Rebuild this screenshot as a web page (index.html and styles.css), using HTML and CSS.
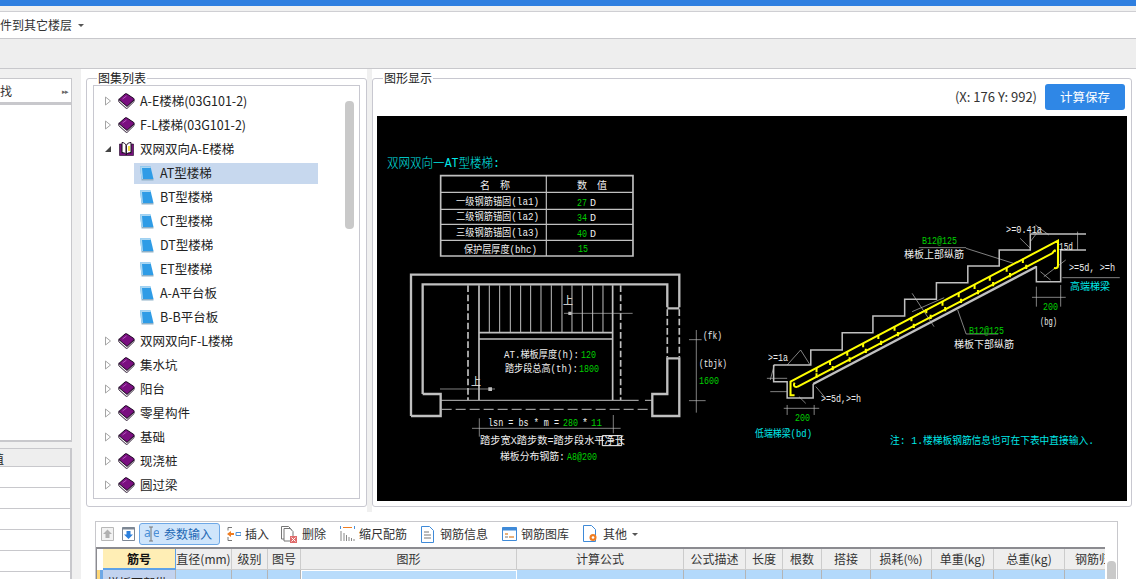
FILE: index.html
```html
<!DOCTYPE html>
<html lang="zh">
<head>
<meta charset="utf-8">
<title>图集列表</title>
<link rel="stylesheet" href="styles.css">
</head>
<body>
<svg class="defs" width="0" height="0" aria-hidden="true">
  <symbol id="book" viewBox="0 0 17 16">
    <path d="M.8 6.500 7 1c.6-.5 1.200-.5 2 0l6.800 4.500c.5.500.5 1 0 1.500L9 13.500z" fill="#7a0f80" stroke="#1a0520"/>
    <path d="M.8 6.500v2.200L8 15.200c.5.300 1 .3 1.300 0l6.800-6.700V7L9 13.500z" fill="#f4f4f4" stroke="#1a0520" stroke-width=".9"/>
    <path d="M4.500 6 8.500 3" stroke="#b555bd" stroke-width="1"/>
  </symbol>
  <symbol id="openbook" viewBox="0 0 17 16">
    <path d="M1.500 3v11.500h14V3h-2v9H3.500V3z" fill="#7a0f80" stroke="#1a0520" stroke-width=".6"/>
    <path d="M4 1.500c2 0 3.200 1 4.200 3v9c-1-1.300-2.200-2-4.200-2zM8.200 4.500c1-2 2.800-3 4.800-3v10c-2 0-3.800.7-4.800 2z" fill="#fff" stroke="#1a0520"/>
    <path d="M10 5h2v5h-2z" fill="#f4e04a"/>
  </symbol>
  <symbol id="leaf" viewBox="0 0 14 15">
    <path d="M0 .500h10.500l3 12.500H1.500z" fill="#2f9ce6"/>
    <path d="M0 .500h10.500l.4 1.500H2l1 11H1.500z" fill="#a9d6f2"/>
    <path d="M1.500 13h12v1.500h-12z" fill="#8fb0c6"/>
  </symbol>
  <symbol id="tri-open" viewBox="0 0 8 10"><path d="M1.500 1 6.500 5l-5 4z" fill="#fff" stroke="#a5a5a5"/></symbol>
  <symbol id="tri-down" viewBox="0 0 8 10"><path d="M7 2v6H1z" fill="#444"/></symbol>
</svg>

<div class="titlebar"></div>
<div class="strip"></div>
<div class="ribbon">
  <div class="ribbon-item"><span>件到其它楼层</span><i class="caret"></i></div>
</div>
<div class="band"></div>

<div class="main">
  <aside class="side">
    <div class="side-top">
      <div class="side-tab"><span>找</span><b class="more">▸▸</b></div>
    </div>
    <div class="side-bottom">
      <div class="side-head"><span>值</span></div>
      <div class="side-row"></div>
      <div class="side-row"></div>
      <div class="side-row"></div>
      <div class="side-row"></div>
      <div class="side-row"></div>
    </div>
  </aside>

  <div class="work">
    <div class="upper">
      <fieldset class="group tree-group">
        <legend>图集列表</legend>
        <div class="tree">
          <div class="scroll-thumb"></div>
          <div class="node"><svg class="tri"><use href="#tri-open"/></svg><svg class="ico"><use href="#book"/></svg><span>A-E楼梯(03G101-2)</span></div>
          <div class="node"><svg class="tri"><use href="#tri-open"/></svg><svg class="ico"><use href="#book"/></svg><span>F-L楼梯(03G101-2)</span></div>
          <div class="node"><svg class="tri"><use href="#tri-down"/></svg><svg class="ico"><use href="#openbook"/></svg><span>双网双向A-E楼梯</span></div>
          <div class="node leaf selected"><svg class="ico-leaf"><use href="#leaf"/></svg><span>AT型楼梯</span></div>
          <div class="node leaf"><svg class="ico-leaf"><use href="#leaf"/></svg><span>BT型楼梯</span></div>
          <div class="node leaf"><svg class="ico-leaf"><use href="#leaf"/></svg><span>CT型楼梯</span></div>
          <div class="node leaf"><svg class="ico-leaf"><use href="#leaf"/></svg><span>DT型楼梯</span></div>
          <div class="node leaf"><svg class="ico-leaf"><use href="#leaf"/></svg><span>ET型楼梯</span></div>
          <div class="node leaf"><svg class="ico-leaf"><use href="#leaf"/></svg><span>A-A平台板</span></div>
          <div class="node leaf"><svg class="ico-leaf"><use href="#leaf"/></svg><span>B-B平台板</span></div>
          <div class="node"><svg class="tri"><use href="#tri-open"/></svg><svg class="ico"><use href="#book"/></svg><span>双网双向F-L楼梯</span></div>
          <div class="node"><svg class="tri"><use href="#tri-open"/></svg><svg class="ico"><use href="#book"/></svg><span>集水坑</span></div>
          <div class="node"><svg class="tri"><use href="#tri-open"/></svg><svg class="ico"><use href="#book"/></svg><span>阳台</span></div>
          <div class="node"><svg class="tri"><use href="#tri-open"/></svg><svg class="ico"><use href="#book"/></svg><span>零星构件</span></div>
          <div class="node"><svg class="tri"><use href="#tri-open"/></svg><svg class="ico"><use href="#book"/></svg><span>基础</span></div>
          <div class="node"><svg class="tri"><use href="#tri-open"/></svg><svg class="ico"><use href="#book"/></svg><span>现浇桩</span></div>
          <div class="node"><svg class="tri"><use href="#tri-open"/></svg><svg class="ico"><use href="#book"/></svg><span>圆过梁</span></div>
        </div>
      </fieldset>

      <fieldset class="group draw-group">
        <legend>图形显示</legend>
        <div class="draw-head">
          <span class="coords">(X: 176 Y: 992)</span>
          <button class="save" type="button">计算保存</button>
        </div>
        <svg class="cad" width="750" height="385" viewBox="377 116 750 385">
          <!-- title + table -->
          <text class="t cy" x="387" y="167" textLength="113" lengthAdjust="spacingAndGlyphs">双网双向一AT型楼梯:</text>
          <g class="ln" transform="translate(377 140) scale(.3333)">
            <path stroke-width="5" d="M191 107H768V348H191z"/>
            <path stroke-width="3.500" d="M191 157H768M191 208H768M191 253H768M191 301H768M508 107V348"/>
          </g>
          <text class="s wh wide" x="480" y="189">名 称</text>
          <text class="s wh wide" x="577" y="189">数 值</text>
          <text class="s wh" x="456" y="205" textLength="83" lengthAdjust="spacingAndGlyphs">一级钢筋锚固(la1)</text>
          <text class="s wh" x="456" y="220" textLength="83" lengthAdjust="spacingAndGlyphs">二级钢筋锚固(la2)</text>
          <text class="s wh" x="456" y="236" textLength="83" lengthAdjust="spacingAndGlyphs">三级钢筋锚固(la3)</text>
          <text class="s wh" x="464" y="253" textLength="73" lengthAdjust="spacingAndGlyphs">保护层厚度(bhc)</text>
          <text class="s gr" x="577" y="206" textLength="10" lengthAdjust="spacingAndGlyphs">27</text><text class="s wh" x="590" y="206">D</text>
          <text class="s gr" x="577" y="221" textLength="10" lengthAdjust="spacingAndGlyphs">34</text><text class="s wh" x="590" y="221">D</text>
          <text class="s gr" x="577" y="237" textLength="10" lengthAdjust="spacingAndGlyphs">40</text><text class="s wh" x="590" y="237">D</text>
          <text class="s gr" x="578" y="252" textLength="10" lengthAdjust="spacingAndGlyphs">15</text>

          <!-- plan -->
          <g class="ln" transform="translate(400 270) scale(.3333)">
            <path stroke-width="7" d="M33 438V14H838V112M68 372V43H802V112M68 372H122V438H33M802 262V372H757V438H838V265H802M802 115H838"/>
            <path stroke-width="5" stroke-dasharray="20 8" d="M802 118V262M838 118V262M204 46V390M662 46V390"/>
            <path stroke-width="5" d="M237 46V390M638 46V390M237 188H638M237 207H638"/>
            <path stroke-width="3" d="M268 46V186M299 46V186M331 46V186M362 46V186M392 46V186M423 46V186M454 46V186M486 46V186M516 46V186M547 46V186M578 46V186M609 46V186M122 391H716M735 391H757"/>
            <path stroke-width="3" stroke-dasharray="30 12" d="M125 418H750"/>
            <path stroke-width="2" d="M492 130H698M120 357H285M889 180V428M867 209H905M867 392H917M216 475H662M238 445V500M640 435V490"/>
            <path class="fillg" stroke="none" d="M505 125h10v10h-10zM265 352h11v11h-11z"/>
            <path stroke="#fff" stroke-width="3" d="M607 497H665V527H607z"/>
          </g>
          <text class="s wh" x="563" y="304">上</text>
          <text class="s wh" x="471" y="385">上</text>
          <text class="s wh" x="703" y="339" textLength="19" lengthAdjust="spacingAndGlyphs">(fk)</text>
          <text class="s wh" x="699" y="367" textLength="28" lengthAdjust="spacingAndGlyphs">(tbjk)</text>
          <text class="s gr" x="699" y="384" textLength="20" lengthAdjust="spacingAndGlyphs">1600</text>
          <text class="s wh" x="504" y="358" textLength="75" lengthAdjust="spacingAndGlyphs">AT.梯板厚度(h):</text>
          <text class="s gr" x="581" y="358" textLength="15" lengthAdjust="spacingAndGlyphs">120</text>
          <text class="s wh" x="505" y="372" textLength="73" lengthAdjust="spacingAndGlyphs">踏步段总高(th):</text>
          <text class="s gr" x="579" y="372" textLength="20" lengthAdjust="spacingAndGlyphs">1800</text>
          <text class="s wh" x="488" y="426" textLength="71" lengthAdjust="spacingAndGlyphs">lsn = bs * m =</text>
          <text class="s gr" x="563" y="426" textLength="15" lengthAdjust="spacingAndGlyphs">280</text><text class="s wh" x="582" y="426">*</text><text class="s gr" x="591" y="426" textLength="11" lengthAdjust="spacingAndGlyphs">11</text>
          <text class="s wh" x="480" y="444" textLength="145" lengthAdjust="spacingAndGlyphs">踏步宽X踏步数=踏步段水平净长</text>
          <text class="s wh" x="500" y="460" textLength="65" lengthAdjust="spacingAndGlyphs">梯板分布钢筋:</text>
          <text class="s gr" x="567" y="460" textLength="30" lengthAdjust="spacingAndGlyphs">A8@200</text>

          <!-- section -->
          <g class="ln" transform="translate(750 210) scale(.3377 .3333)">
            <path stroke-width="4.500" d="M70 465H180V420H273V368H364V318H458V268H552V218H645V168H738V120H830V72H995M918 120H995M70 465V515H110V564H187V522M848 168V215H920V120"/>
            <path stroke-width="7" d="M187 522 848 170"/>
            <path stroke-width="2" d="M640 115 780 160M500 113H640M615 300 640 372H735M480 305 575 263M490 315 560 280M480 250 545 350M925 203H1095M848 230V290M920 225V290M835 262H935M100 595H205M110 585V615M190 585V615M72 465 60 510M110 465 150 420 178 465M50 505H110M60 545H110M845 45 885 75M800 85 830 115M830 95 860 55M970 65V120M935 150 870 200M860 185 890 210M195 530 220 560M145 560 165 580"/>
            <g class="rebar">
              <path stroke-width="6" d="M132 556H120V515L912 92V168Q912 176 900 174M140 531Q126 531 132 518M140 531 895 130Q906 114 902 126"/>
              <path stroke-width="6" d="M197 474v13M237 452v13M288 424v13M335 399v13M380 374v13M428 349v13M478 321v13M522 297v13M570 274v13M618 249v13M665 224v13M710 199v13M760 172v13M808 146v13M197 490v13M245 468v13M295 442v13M343 416v13M388 392v13M438 366v13M485 341v13M535 314v13M578 291v13M625 266v13M675 240v13M720 216v13M770 189v13M818 164v13"/>
            </g>
          </g>
          <text class="s gr" x="922" y="244" textLength="35" lengthAdjust="spacingAndGlyphs">B12@125</text>
          <text class="s wh" x="904" y="258" textLength="60" lengthAdjust="spacingAndGlyphs">梯板上部纵筋</text>
          <text class="s gr" x="969" y="334" textLength="35" lengthAdjust="spacingAndGlyphs">B12@125</text>
          <text class="s wh" x="954" y="348" textLength="60" lengthAdjust="spacingAndGlyphs">梯板下部纵筋</text>
          <text class="s wh" x="1006" y="233" textLength="36" lengthAdjust="spacingAndGlyphs">&gt;=0.41a</text>
          <text class="s wh" x="1059" y="250" textLength="14" lengthAdjust="spacingAndGlyphs">15d</text>
          <text class="s wh" x="1069" y="271" textLength="46" lengthAdjust="spacingAndGlyphs">&gt;=5d, &gt;=h</text>
          <text class="s cy" x="1070" y="290" textLength="40" lengthAdjust="spacingAndGlyphs">高端梯梁</text>
          <text class="s gr" x="1043" y="310" textLength="15" lengthAdjust="spacingAndGlyphs">200</text>
          <text class="s wh" x="1040" y="325" textLength="17" lengthAdjust="spacingAndGlyphs">(bg)</text>
          <text class="s wh" x="768" y="361" textLength="20" lengthAdjust="spacingAndGlyphs">&gt;=1a</text>
          <text class="s wh" x="821" y="402" textLength="40" lengthAdjust="spacingAndGlyphs">&gt;=5d,&gt;=h</text>
          <text class="s gr" x="795" y="421" textLength="15" lengthAdjust="spacingAndGlyphs">200</text>
          <text class="s cy" x="755" y="437" textLength="57" lengthAdjust="spacingAndGlyphs">低端梯梁(bd)</text>
          <text class="s cy" x="890" y="444" textLength="204" lengthAdjust="spacingAndGlyphs">注: 1.楼梯板钢筋信息也可在下表中直接输入.</text>
        </svg>
      </fieldset>
    </div>

    <div class="lower">
      <div class="grid-box">
        <div class="tools">
          <svg class="tool-ico arrow" width="13" height="14" viewBox="0 0 13 14"><path d="M.5.500h12v13H.5z" fill="#f2f2f2" stroke="#b8b8b8"/><path d="M6.500 2.500 11 7H8.500v4h-4V7H2z" fill="#b0b0b0"/></svg>
          <svg class="tool-ico arrow gap-s" width="13" height="14" viewBox="0 0 13 14"><path d="M.5.500h12v13H.5z" fill="#fff" stroke="#7d8794"/><path d="M.5.500h12v2H.5z" fill="#7d8794"/><path d="M6.500 12 2 7.500h2.500V4h4v3.500H11z" fill="#2b7fdc"/></svg>
          <div class="tool active">
            <svg width="15" height="16" viewBox="0 0 15 16"><text class="ae" x="0" y="11">a</text><text class="ae" x="9" y="11">e</text><path d="M5 1h4M5 15h4M7 1v14" stroke="#777" fill="none"/></svg>
            <span>参数输入</span>
          </div>
          <div class="tool">
            <svg width="14" height="16" viewBox="0 0 14 16"><path d="M5 1.500H1v3M1 11v3.500h4" stroke="#777" fill="none"/><path d="M0 8l4-3v2h3v2H4v2z" fill="#ef7d22"/><path d="M9 6.500h5v3H9z" fill="none" stroke="#4a90d9"/></svg>
            <span>插入</span>
          </div>
          <div class="tool">
            <svg width="17" height="17" viewBox="0 0 17 17"><path d="M.5.500h7l3 3V13H.5z" fill="#fff" stroke="#777"/><path d="M3 2.500h6l3 3V15H3z" fill="#fff" stroke="#777"/><path d="M9 10h7v7H9z" fill="#e06c6c"/><path d="M10.500 11.500l4 4m0-4-4 4" stroke="#fff"/></svg>
            <span>删除</span>
          </div>
          <div class="tool tool-sp">
            <svg width="15" height="16" viewBox="0 0 15 16"><path d="M3 1.500h9" stroke="#ef7d22"/><path d="M.5 0v3M14.500 0v3" stroke="#4a90d9"/><path d="M1 5v10M4 7v8M6.500 9v6M9 11v4M11.500 12v3M14 13v2" stroke="#888"/></svg>
            <span>缩尺配筋</span>
          </div>
          <div class="tool tool-sp tool-gap">
            <svg width="13" height="17" viewBox="0 0 13 17"><path d="M.5.500h8l4 4v12H.5z" fill="#fff" stroke="#3f8ad8"/><path d="M3 6h5M3 9h7M3 12h7" stroke="#777"/></svg>
            <span>钢筋信息</span>
          </div>
          <div class="tool tool-sp">
            <svg width="15" height="14" viewBox="0 0 15 14"><path d="M.5.500h14v13H.5z" fill="#fff" stroke="#3f8ad8"/><path d="M.5.500h14v3H.5z" fill="#3f8ad8"/><path d="M3 6h3v2H3zM7 9h5v2H7z" fill="#e9b07a"/><path d="M3 10h3" stroke="#777"/></svg>
            <span>钢筋图库</span>
          </div>
          <div class="tool tool-sp">
            <svg width="15" height="18" viewBox="0 0 15 18"><path d="M.5.500h8l4 4v12H.5z" fill="#fff" stroke="#3f8ad8"/><circle cx="10" cy="12.500" r="3.500" fill="#ef7d22"/><circle cx="10" cy="12.500" r="1.300" fill="#fff"/></svg>
            <span>其他</span><i class="caret"></i>
          </div>
        </div>
        <div class="sheet">
          <div class="corner"></div><div class="h key">筋号</div><div class="h">直径(mm)</div><div class="h">级别</div><div class="h">图号</div><div class="h">图形</div><div class="h">计算公式</div><div class="h">公式描述</div><div class="h">长度</div><div class="h">根数</div><div class="h">搭接</div><div class="h">损耗(%)</div><div class="h">单重(kg)</div><div class="h">总重(kg)</div><div class="h clip">钢筋归类</div>
          <div class="mark"></div><div class="c first">梯板下部纵</div><div class="c"></div><div class="c"></div><div class="c"></div><div class="c shape"></div><div class="c"></div><div class="c"></div><div class="c"></div><div class="c"></div><div class="c"></div><div class="c"></div><div class="c"></div><div class="c"></div><div class="c"></div>
        </div>
        <div class="vbar"></div>
      </div>
    </div>
  </div>
</div>
</body>
</html>
```
FILE: styles.css
```css
* { box-sizing: border-box; }
html, body { margin: 0; padding: 0; }
body {
  width: 1136px;
  height: 579px;
  overflow: hidden;
  background: #fff;
  color: #222;
  font: 12px/16px "Noto Sans CJK SC", "Noto Sans", sans-serif;
}
.defs { position: absolute; }
.titlebar { height: 6px; background: #2e7fe0; }
.strip { height: 6px; background: #f0f0f0; border-bottom: 1px solid #cfcfd3; }
.ribbon { height: 27px; background: #fff; border-bottom: 1px solid #c8c8cc; display: flex; align-items: center; }
.ribbon-item { display: flex; align-items: center; gap: 6px; height: 22px; padding-right: 5px; color: #333; }
.caret { width: 0; height: 0; border: 3px solid transparent; border-top: 3px solid #555; border-bottom: 0; }
.band { height: 30px; background: #eee; border-bottom: 1px solid #c8c8cc; }

.main { display: flex; height: 510px; background: #f0f0f0; }
.side { width: 72px; flex: none; padding-top: 9px; display: flex; flex-direction: column; gap: 6px; margin-right: 9px; }
.side-top { height: 364px; background: #fff; border: solid #c8c8cc; border-width: 1px 1px 2px 0; }
.side-tab { height: 26px; display: flex; justify-content: space-between; align-items: center; border-bottom: 3px solid #c8c8cc; color: #333; padding-right: 3px; }
.more { font-size: 7px; font-weight: normal; color: #666; letter-spacing: -1px; }
.side-bottom { flex: 1; background: #fff; border-right: 2px solid #c8c8cc; }
.side-head { height: 19px; background: #eee; border-top: 1px solid #c8c8cc; border-bottom: 1px solid #c8c8cc; overflow: hidden; line-height: 19px; }
.side-head span { display: block; margin-left: -8px; }
.side-row { height: 21px; border-bottom: 1px solid #c8c8cc; }

.work { flex: 1; display: flex; flex-direction: column; min-width: 0; }
.upper { height: 443px; display: flex; background: linear-gradient(90deg, #fff 0 286px, #f0f0f0 286px 291px, #fff 291px); }
.group { margin: 2px 0 5px; padding: 0 6px 7px; border: 1px solid #c8c8d0; border-radius: 3px; min-width: 0; background: #fff; }
.group legend { padding: 0 1px; line-height: 14px; color: #222; font-size: 12px; }
.tree-group { width: 281px; margin-left: 5px; margin-right: 5px; flex: none; }
.tree-group legend { margin-left: 4px; }
.tree { position: relative; height: 414px; border: 1px solid #c8c8d0; padding-top: 3px; overflow: hidden; background: #fff; }
.scroll-thumb { position: absolute; left: 251px; top: 15px; width: 9px; height: 128px; border-radius: 4px; background: #c9c9c9; }
.node { height: 24px; display: flex; align-items: center; padding-left: 10px; font-size: 12.5px; color: #222; white-space: nowrap; }
.tri { width: 8px; height: 10px; flex: none; margin-right: 6px; }
.ico { width: 17px; height: 16px; flex: none; margin-right: 5px; }
.leaf { padding-left: 46px; }
.ico-leaf { width: 14px; height: 15px; flex: none; margin-right: 6px; }
.selected::before { content: ""; position: absolute; left: 40px; width: 184px; height: 21px; background: #c7d8ee; z-index: 0; }
.selected > * { position: relative; z-index: 1; }

.draw-group { width: 760px; flex: none; padding: 0 4px 5px; }
.draw-group legend { margin-left: 6px; }
.draw-head { height: 32px; margin-top: -1px; display: flex; justify-content: flex-end; align-items: flex-start; gap: 8px; padding-right: 2px; }
.coords { font-size: 13px; line-height: 26px; color: #333; }
.save { width: 80px; height: 26px; border: 0; border-radius: 3px; background: #2f87e6; color: #fff; font: 12.5px/26px "Noto Sans CJK SC", sans-serif; padding: 0; }
.cad { display: block; background: #000; }
.ln { fill: none; stroke: #c0c0c0; }
.fillg { fill: #c0c0c0; }
.rebar { stroke: #ffff00; }
.t, .s { font-family: "Liberation Mono", "Noto Sans CJK SC", monospace; }
.t { font-size: 13px; font-weight: 300; }
.s { font-size: 10px; }
.wide { word-spacing: 4px; }
.wh { fill: #eee; }
.cy { fill: #00e8e8; }
.gr { fill: #00d000; }

.lower { flex: 1; background: #fff; padding: 9px 18px 0 14px; }
.grid-box { position: relative; height: 100%; border: 1px solid #c8c8cc; border-bottom: 0; }
.tools { height: 25px; display: flex; align-items: center; padding-left: 5px; font-size: 12px; color: #333; padding-bottom: 1px; }
.tool-ico { flex: none; }
.gap-s { margin-left: 8px; margin-right: 4px; }
.tool { height: 22px; display: flex; align-items: center; gap: 4px; padding: 0 5px; white-space: nowrap; margin-right: 1px; }
.tool + .tool { margin-left: 1px; }
.tool + .tool-sp { margin-left: 3px; }
.tool-gap { gap: 6px; }
.tool:last-child { gap: 5px; }
.tool.active { width: 81px; background: #cfe5fb; border: 1px solid #6ea8e6; border-radius: 3px; color: #2268b4; padding: 0 0 0 4px; gap: 5px; }
.ae { font-size: 12px; fill: #4a8fd6; font-family: "Noto Sans", sans-serif; }
.sheet {
  display: grid;
  grid-template-columns: 6px 73px 56px 36px 33px 216px 167px 62px 37px 39px 49px 61px 62px 71px 41px;
  grid-template-rows: 21px 21px;
  border-top: 2px solid #8b8b90;
  border-left: 1px solid #8b8b90;
  margin-right: 12px;
  overflow: hidden;
}
.corner { background: #fff; }
.h { background: #eee; border-right: 1px solid #ccc; border-bottom: 1px solid #ccc; text-align: center; line-height: 20px; white-space: nowrap; overflow: hidden; color: #333; }
.key { background: #ffeeb5; border: 0; border-right: 1px solid #5ea2e8; border-bottom: 2px solid #5ea2e8; font-weight: 700; color: #111; }
.clip { text-align: left; padding-left: 10px; border-right: 0; }
.mark { background: linear-gradient(90deg, #ffd878 0 3px, #6ea8e6 3px 6px); }
.c { background: #b3d9fb; border-right: 1px solid #b4b4b4; line-height: 26px; }
.first { background: #c2d3ef; padding-left: 4px; white-space: nowrap; overflow: hidden; }
.shape { background: #b9dcfb; border-left: 1px solid #fff; border-top: 1px solid #fff; border-right: 1px solid #fff; }
.vbar { position: absolute; left: 1011px; top: 39px; width: 9px; height: 30px; border-radius: 4px; background: #c9c9c9; }
```
